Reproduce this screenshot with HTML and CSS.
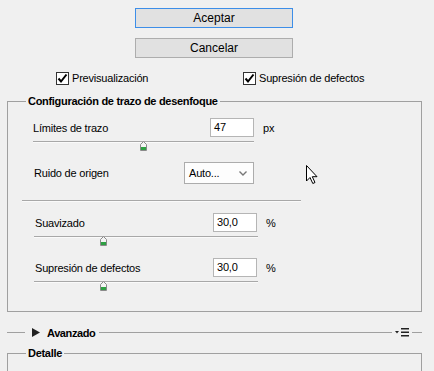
FILE: index.html
```html
<!DOCTYPE html>
<html lang="es">
<head>
    <meta charset="UTF-8">
    <title>Trazo de desenfoque</title>
    <link rel="stylesheet" href="styles.css">
</head>
<body>
    <div class="actions">
        <div class="btn btn-default">Aceptar</div>
        <div class="btn">Cancelar</div>
    </div>

    <div class="options">
        <label class="check"><span class="box"><svg width="11" height="11" viewBox="0 0 11 11"><path d="M1.5 5.5 L4 8.5 L9.5 1.5" fill="none" stroke="#000" stroke-width="2"/></svg></span>Previsualización</label>
        <label class="check"><span class="box"><svg width="11" height="11" viewBox="0 0 11 11"><path d="M1.5 5.5 L4 8.5 L9.5 1.5" fill="none" stroke="#000" stroke-width="2"/></svg></span>Supresión de defectos</label>
    </div>

    <!-- Configuración -->
    <div class="group">
        <div class="group-title">Configuración de trazo de desenfoque</div>

        <div class="field first">
            <span class="label">Límites de trazo</span>
            <span class="input">47</span>
            <span class="unit">px</span>
        </div>
        <div class="slider">
            <div class="track"></div>
            <svg class="thumb" style="left: 107px" width="7" height="10" viewBox="0 0 7 10"><path d="M3.5 0.5 L6.5 3.5 V9.5 H0.5 V3.5 Z" fill="#f4f4f4" stroke="#8a8a8a"/><rect x="1" y="6" width="5" height="3" fill="#2ea043"/></svg>
        </div>

        <div class="field select-row">
            <span class="label">Ruido de origen</span>
            <span class="select">Auto...<svg width="8" height="5" viewBox="0 0 8 5"><path d="M0.5 0.5 L4 4 L7.5 0.5" fill="none" stroke="#777" stroke-width="1.4"/></svg></span>
        </div>

        <div class="separator"></div>

        <div class="sub">
            <div class="field">
                <span class="label">Suavizado</span>
                <span class="input">30,0</span>
                <span class="unit">%</span>
            </div>
            <div class="slider">
                <div class="track"></div>
                <svg class="thumb" style="left: 66px" width="7" height="10" viewBox="0 0 7 10"><path d="M3.5 0.5 L6.5 3.5 V9.5 H0.5 V3.5 Z" fill="#f4f4f4" stroke="#8a8a8a"/><rect x="1" y="6" width="5" height="3" fill="#2ea043"/></svg>
            </div>
            <div class="field">
                <span class="label">Supresión de defectos</span>
                <span class="input">30,0</span>
                <span class="unit">%</span>
            </div>
            <div class="slider">
                <div class="track"></div>
                <svg class="thumb" style="left: 66px" width="7" height="10" viewBox="0 0 7 10"><path d="M3.5 0.5 L6.5 3.5 V9.5 H0.5 V3.5 Z" fill="#f4f4f4" stroke="#8a8a8a"/><rect x="1" y="6" width="5" height="3" fill="#2ea043"/></svg>
            </div>
        </div>
    </div>

    <!-- Avanzado -->
    <div class="section-row">
        <span class="rule short"></span>
        <svg class="arrow" width="8" height="9" viewBox="0 0 8 9"><path d="M0 0 L8 4.5 L0 9 Z" fill="#222"/></svg>
        <span class="section-title">Avanzado</span>
        <span class="rule"></span>
        <svg class="menu-icon" width="14" height="9" viewBox="0 0 14 9"><path d="M0 3 H4 L2 5.5 Z" fill="#222"/><rect x="6" y="0" width="8" height="1.5" fill="#222"/><rect x="6" y="3.5" width="8" height="1.5" fill="#222"/><rect x="6" y="7" width="8" height="1.5" fill="#222"/></svg>
        <span class="rule end"></span>
    </div>

    <div class="group detail">
        <div class="group-title">Detalle</div>
    </div>

    <svg class="cursor" width="13" height="20" viewBox="0 0 13 20"><path d="M0.5 0.5 V16 L4 12.5 L6.8 18.5 L9 17.5 L6.3 11.7 H11 Z" fill="#fff" stroke="#000" stroke-linejoin="round"/></svg>
</body>
</html>
```

FILE: styles.css
```css
body {
    margin: 0;
    width: 434px;
    height: 371px;
    overflow: hidden;
    background-color: #f0f0f0;
    font-family: 'Liberation Sans', Arial, sans-serif;
    font-size: 11px;
    letter-spacing: -0.2px;
    color: #000;
    position: relative;
}
.actions {
    display: flex;
    flex-direction: column;
    align-items: flex-start;
    gap: 10px;
    padding: 8px 0 0 135px;
}
.btn {
    box-sizing: border-box;
    width: 158px;
    height: 20px;
    line-height: 18px;
    text-align: center;
    font-size: 12px;
    letter-spacing: 0;
    background-color: #e1e1e1;
    border: 1px solid #adadad;
}
.btn-default {
    border-color: #3d8ee8;
}
.options {
    display: grid;
    grid-template-columns: 187px auto;
    padding-left: 56px;
    margin-top: 13px;
}
.check {
    display: flex;
    align-items: center;
    height: 14px;
    gap: 3px;
}
.box {
    box-sizing: border-box;
    width: 13px;
    height: 13px;
    border: 1px solid #333;
    background: #fff;
    display: flex;
}
.group {
    box-sizing: border-box;
    margin: 16px 12px 0 7px;
    height: 211px;
    border: 1px solid #a0a0a0;
}
.group-title {
    width: fit-content;
    margin: -7px 0 0 18px;
    padding: 0 2px;
    line-height: 13px;
    font-weight: bold;
    letter-spacing: -0.3px;
    background-color: #f0f0f0;
}
.field {
    display: flex;
    align-items: center;
    height: 19px;
    padding-left: 25px;
}
.field.first {
    margin-top: 10px;
}
.label {
    width: 177px;
}
.input {
    box-sizing: border-box;
    width: 44px;
    height: 19px;
    line-height: 17px;
    padding-left: 3px;
    background: #fff;
    border: 1px solid #b5b5b5;
}
.unit {
    margin-left: 9px;
}
.slider {
    position: relative;
    height: 11px;
    margin: 2px 0 0 25px;
    width: 221px;
}
.track {
    margin-top: 4px;
    height: 1px;
    background-color: #a8a8a8;
    border-bottom: 1px solid #fafafa;
}
.thumb {
    position: absolute;
    top: 0;
}
.select-row {
    margin-top: 10px;
    height: 22px;
    padding-left: 26px;
}
.select-row .label {
    width: 150px;
}
.select {
    box-sizing: border-box;
    width: 70px;
    height: 22px;
    display: flex;
    align-items: center;
    justify-content: space-between;
    padding: 0 6px 0 4px;
    background: #fdfdfd;
    border: 1px solid #acacac;
}
.separator {
    margin: 16px 0 0 14px;
    width: 279px;
    height: 1px;
    background-color: #a8a8a8;
    border-bottom: 1px solid #fafafa;
}
.sub {
    margin-top: 11px;
}
.sub .field {
    padding-left: 27px;
}
.sub .label {
    width: 178px;
}
.sub .unit {
    margin-left: 9px;
}
.sub .slider {
    margin: 4px 0 11px 26px;
    width: 224px;
}
.sub .slider:last-child {
    margin-bottom: 0;
    margin-top: 3px;
}
.section-row {
    display: flex;
    align-items: center;
    height: 13px;
    margin: 14px 12px 0 7px;
}
.rule {
    flex: 1;
    height: 1px;
    background-color: #a0a0a0;
}
.rule.short {
    flex: none;
    width: 18px;
    margin-right: 7px;
}
.rule.end {
    flex: none;
    width: 10px;
    margin-left: 3px;
}
.arrow {
    margin-right: 7px;
}
.section-title {
    font-weight: bold;
    letter-spacing: -0.4px;
    margin-right: 4px;
}
.menu-icon {
    margin-left: 3px;
}
/* the box runs on below the window, so no bottom edge */
.detail {
    margin-top: 14px;
    height: 18px;
    border-bottom: none;
}
.cursor {
    position: absolute;
    left: 306px;
    top: 165px;
}
```
